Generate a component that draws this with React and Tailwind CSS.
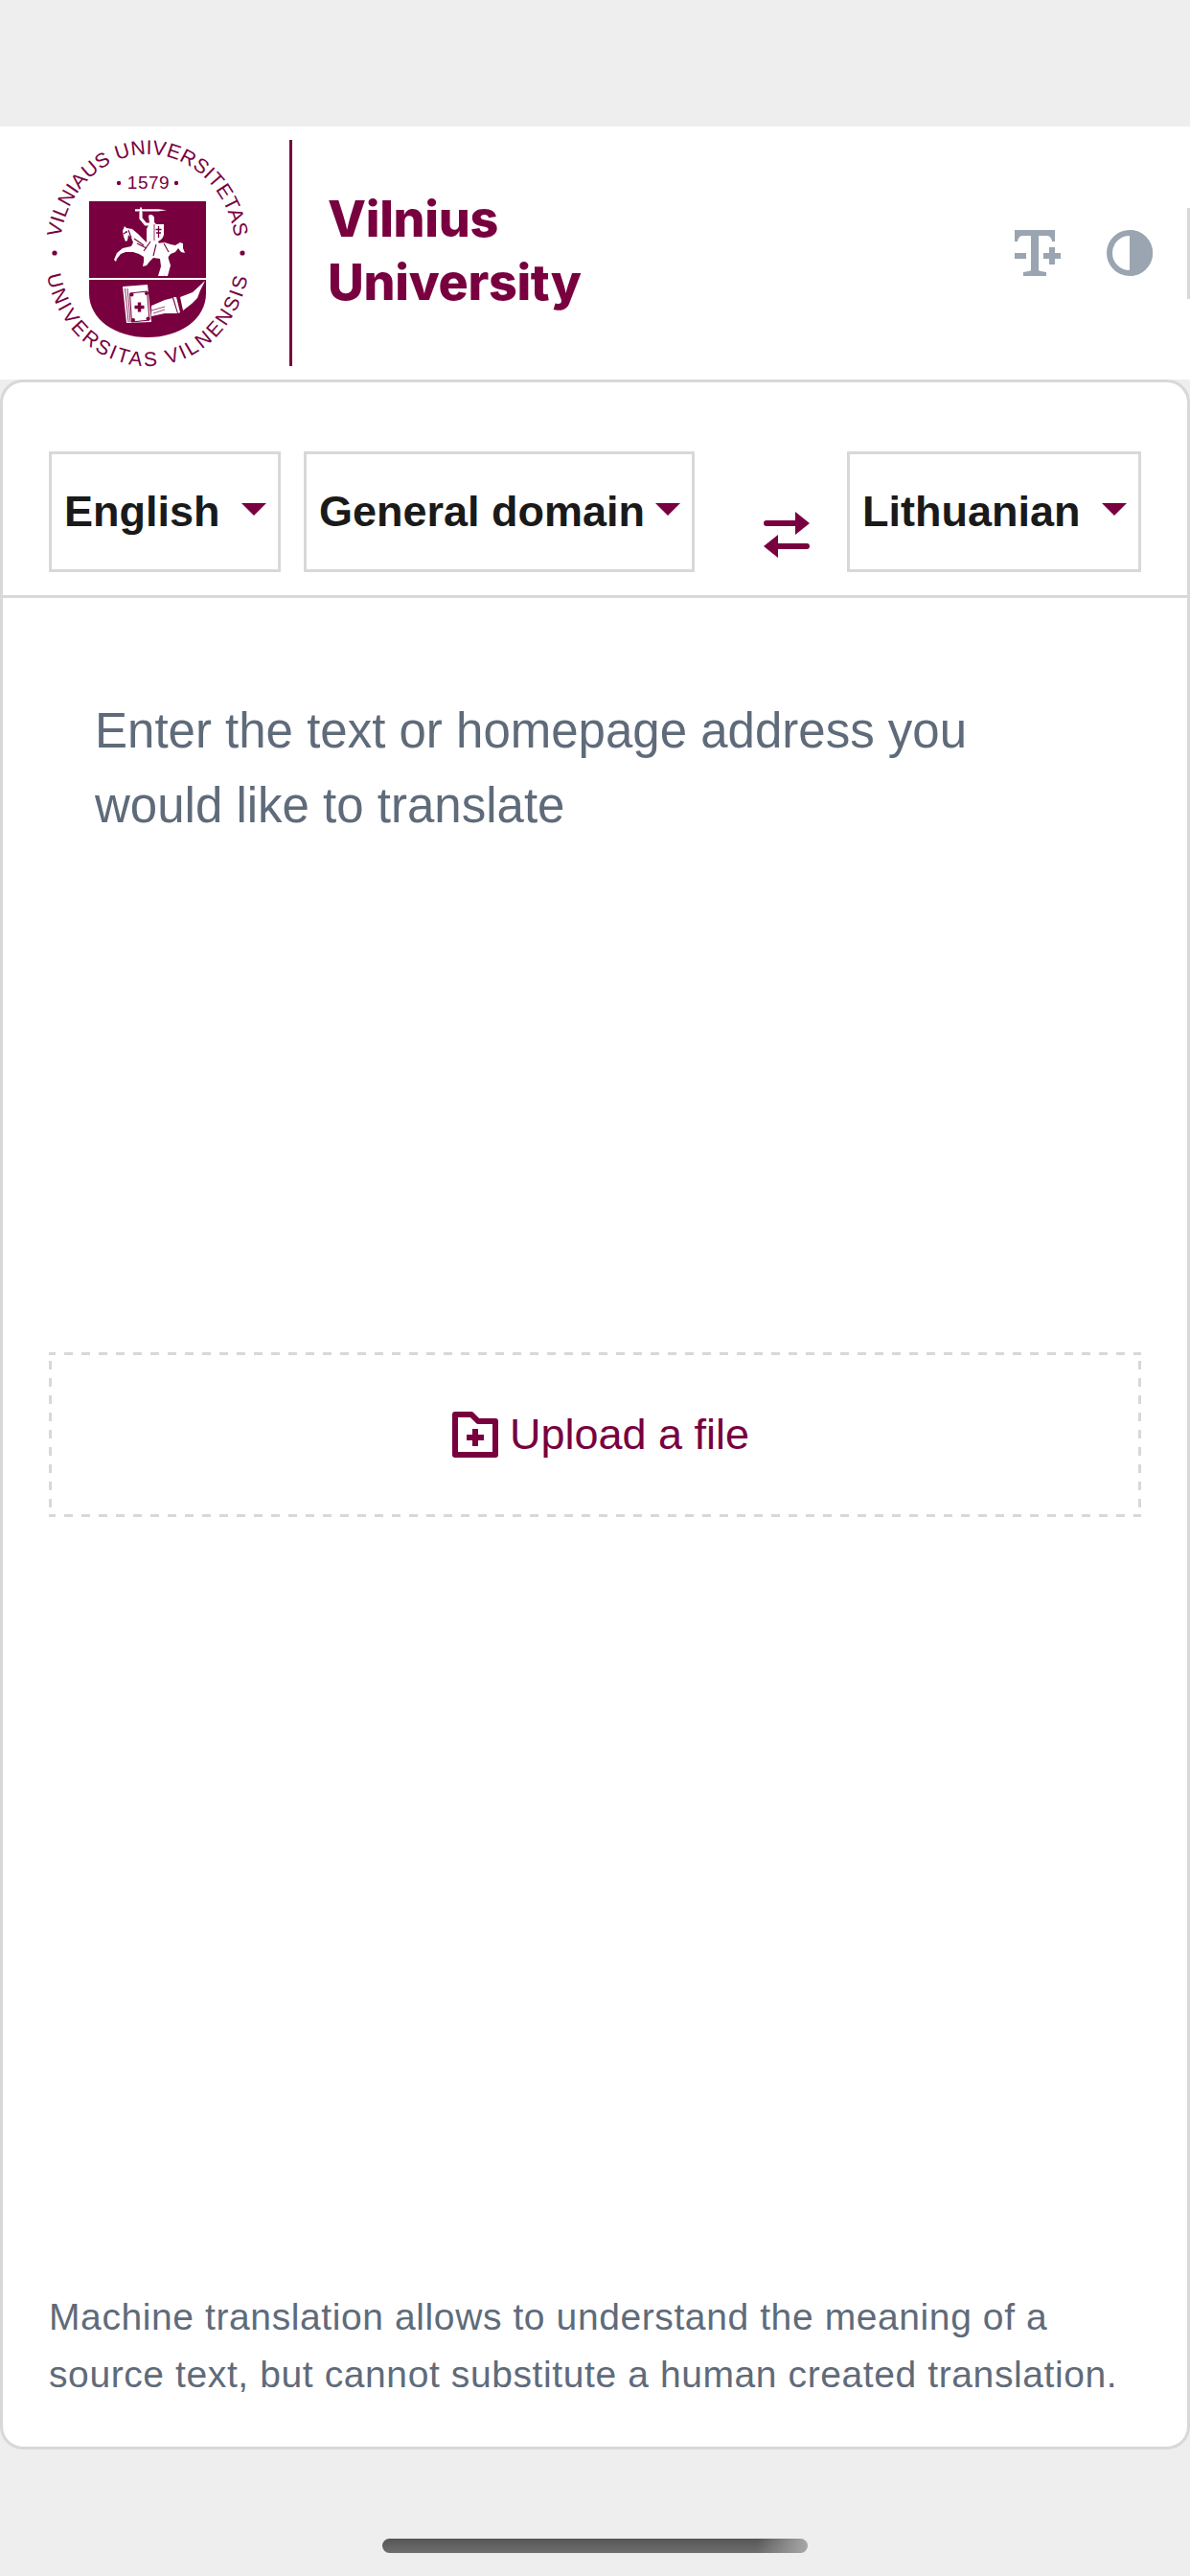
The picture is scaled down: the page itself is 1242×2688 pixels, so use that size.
import React from 'react';

const WINE = '#78003f';

function Knight() {
  return (
    <g>
      {/* sword and raised arm */}
      <path d="M141 217.200 H165 L174 218.200 L165 219.400 H141 Z" fill="#fff" />
      <rect x="146" y="215.500" width="2" height="6" fill="#fff" />
      <path d="M147 220 L147 227 L152 233 L157 233" fill="none" stroke="#fff" strokeWidth="3.200" />
      {/* rider */}
      <path d="M155 224 C157 222 160 223 161 226 L161 231 L163 233 L171 233 L171 244 C170 248 167 250 165 251 L168 258 L160 262 L156 262 L153 252 L153 238 L156 232 Z" fill="#fff" />
      <path d="M165.500 235 V247 M162.500 238.500 H168.500 M163 242 H168" stroke={WINE} strokeWidth="1.300" fill="none" />
      <path d="M161 233 L161 250" stroke={WINE} strokeWidth="0.800" fill="none" />
      {/* horse */}
      <path d="M130 235 L132 237 L138 238 L144 243 L150 249 L153 252 L163 253 L172 252 L178 254 L183 255 L188 252 L191 253 L191 258 L193 263 L189 262 L186 258 L183 262 L178 264 L175 268 L175 276 L171 287 L165 287 L168 277 L167 269 L160 268 L156 272 L153 276 L149 277 L150 272 L150 267 L145 264 L139 262 L131 262 L126 264 L122 269 L121 272 L119 270 L122 263 L128 258 L137 256 L139 252 L137 247 L134 244 L133 250 L131 251 L129 246 L128 240 Z" fill="#fff" />
      <path d="M175 266 L178 276 L175 287 H171 L174 277 L171 268 Z" fill="#fff" />
      {/* harness */}
      <path d="M134 239 L137 247 M140 248 L150 255 M143 253 L153 258 M150 261 L157 251 M171 253 L176 262 M163 254 L160 266 M132 241 L129 243" stroke={WINE} strokeWidth="1.100" fill="none" />
      <circle cx="132" cy="241" r="0.900" fill={WINE} />
    </g>
  );
}

function BookAndHand() {
  return (
    <g>
      {/* book */}
      <path d="M128 298 L154 296 L158 335 L132 336 Z" fill="#fff" />
      <path d="M130.500 300 L134 335 M133 300 L136 335" stroke={WINE} strokeWidth="0.800" fill="none" />
      <path d="M135.500 305 L153.500 303 L156 333 L137.500 335 Z" fill="#fff" stroke={WINE} strokeWidth="1" />
      <path d="M145.500 314.500 V324.500 M140.500 319.500 H150.500" stroke={WINE} strokeWidth="3.400" fill="none" />
      <circle cx="137.500" cy="306.500" r="2" fill={WINE} />
      <circle cx="153" cy="305" r="2" fill={WINE} />
      <circle cx="139" cy="333" r="2" fill={WINE} />
      <circle cx="154.500" cy="331.500" r="2" fill={WINE} />
      {/* hand and sleeve */}
      <path d="M158 318 L172 312 L180 310 L185 326 L172 326 L158 329 Z" fill="#fff" />
      <path d="M158 323 L172 319 M160 326 L172 322" stroke={WINE} strokeWidth="0.700" fill="none" />
      <path d="M181 309 L184 309 L188 325 L186 326 Z" fill="#fff" />
      <path d="M188 309 L201 304 L214 292 L209 302 L206 310 L200 316 L191 323 Z" fill="#fff" />
    </g>
  );
}

function Seal() {
  return (
    <svg width="216" height="240" viewBox="46 143 216 240" className="shrink-0 overflow-visible">
      <defs>
        <path id="sealTop" d="M 62 263 A 92 103 0 0 1 246 263" fill="none" />
        <path id="sealBottom" d="M 47 263 A 107 118 0 0 0 261 263" fill="none" />
      </defs>
      <text fontFamily="'Liberation Sans', sans-serif" fontSize="21" letterSpacing="0.300" fill={WINE}>
        <textPath href="#sealTop" startOffset="50%" textAnchor="middle">VILNIAUS UNIVERSITETAS</textPath>
      </text>
      <text fontFamily="'Liberation Sans', sans-serif" fontSize="21" letterSpacing="2.500" fill={WINE}>
        <textPath href="#sealBottom" startOffset="50%" textAnchor="middle">UNIVERSITAS VILNENSIS</textPath>
      </text>
      <text x="155" y="196" textAnchor="middle" fontFamily="'Liberation Sans', sans-serif" fontSize="19" letterSpacing="0.500" fill={WINE}>1579</text>
      <circle cx="124" cy="190" r="2.200" fill={WINE} />
      <circle cx="184" cy="190" r="2.200" fill={WINE} />
      <circle cx="57" cy="263" r="2.600" fill={WINE} />
      <circle cx="253" cy="263" r="2.600" fill={WINE} />

      <rect x="93" y="209" width="122" height="80" fill={WINE} />
      <path d="M93 291 H215 V305 C215 332 188 351 154 351 C120 351 93 332 93 305 Z" fill={WINE} />
      <Knight />
      <BookAndHand />
    </svg>
  );
}

function Select({ label, width }) {
  return (
    <div className={`${width} h-[126px] border-[3px] border-[#d8d8d8] flex items-center justify-between pl-[13px] pr-[12px] shrink-0`}>
      <span className="text-[45px] font-bold text-[#1a1a1a] leading-none -mt-[2px] whitespace-nowrap">{label}</span>
      <span className="w-0 h-0 border-l-[13px] border-r-[13px] border-t-[13px] border-l-transparent border-r-transparent border-t-[#78003f] -mt-[5px]"></span>
    </div>
  );
}

function HeaderIcons() {
  return (
    <div className="flex items-center gap-[48px] ml-auto">
      <svg width="48" height="48" viewBox="0 0 48 48" fill="#9aa5b1">
        <path d="M0 0 H42 V12 H39 C38 7 36 6 33 6 H25 V42 C25 43 29 43 33 44 V48 H9 V44 C13 43 17 43 17 42 V6 H9 C6 6 4 7 3 12 H0 Z" />
        <rect x="0" y="24" width="12" height="6" />
        <path d="M36 18 H42 V24 H48 V30 H42 V36 H36 V30 H30 V24 H36 Z" />
      </svg>
      <svg width="48" height="48" viewBox="0 0 48 48">
        <circle cx="24" cy="24" r="21" fill="#fff" stroke="#9aa5b1" strokeWidth="6" />
        <path d="M24 0 A24 24 0 0 1 24 48 Z" fill="#9aa5b1" />
      </svg>
    </div>
  );
}

export default function App() {
  return (
    <div className="w-[1242px] h-[2688px] bg-[#eeeeee] flex flex-col font-['Liberation_Sans',Arial,sans-serif] overflow-hidden">
      <div className="h-[132px] shrink-0"></div>

      {/* University header */}
      <header className="h-[264px] shrink-0 bg-white flex items-center pl-[46px]">
        <Seal />
        <div className="w-[3px] h-[236px] bg-[#78003f] ml-[40px] shrink-0"></div>
        <div className="ml-[37px] font-['Inter',sans-serif] font-extrabold text-[52px] leading-[66px] text-[#78003f] -mt-[4px] tracking-[-0.3px]">
          <div>Vilnius</div>
          <div>University</div>
        </div>
        <HeaderIcons />
        <div className="w-[3px] h-[95px] bg-[#d8d8d8] ml-[36px] shrink-0"></div>
      </header>

      {/* Translation card */}
      <main className="h-[2160px] shrink-0 bg-white border-[3px] border-[#d8d8d8] rounded-[24px] flex flex-col">
        <div className="h-[225px] shrink-0 border-b-[3px] border-[#d8d8d8] flex items-start pt-[72px] pl-[48px]">
          <Select label="English" width="w-[242px]" />
          <div className="ml-[24px]">
            <Select label="General domain" width="w-[408px]" />
          </div>
          <svg width="48" height="48" viewBox="0 0 48 48" fill="#78003f" className="ml-[72px] mt-[63px] shrink-0">
            <path d="M33 0 L48 12 L33 24 V15 H3 A3 3 0 0 1 3 9 H33 Z" />
            <path d="M15 24 L0 36 L15 48 V39 H45 A3 3 0 0 0 45 33 H15 Z" />
          </svg>
          <div className="ml-[39px]">
            <Select label="Lithuanian" width="w-[307px]" />
          </div>
        </div>

        <div className="flex-1 px-[48px] flex flex-col">
          <p className="mt-[100px] pl-[48px] pr-[100px] text-[51px] leading-[78px] text-[#5f6b7a] h-[156px]">
            Enter the text or homepage address you would like to translate
          </p>
          <button className="mt-[531px] h-[172px] w-[1140px] pl-[12px] flex items-center justify-center text-[45px] text-[#78003f] bg-[linear-gradient(90deg,#d8d8d8_50%,transparent_50%),linear-gradient(90deg,#d8d8d8_50%,transparent_50%),linear-gradient(0deg,#d8d8d8_50%,transparent_50%),linear-gradient(0deg,#d8d8d8_50%,transparent_50%)] bg-[length:18px_3px,18px_3px,3px_18px,3px_18px] bg-[position:-2px_0,-2px_100%,0_0,100%_0] [background-repeat:repeat-x,repeat-x,repeat-y,repeat-y]">
            <svg width="48" height="48" viewBox="0 0 48 48" fill="none" className="mr-[12px]">
              <path d="M3 3 H20 L27 10 H45 V45 H3 Z" stroke="#78003f" strokeWidth="6" strokeLinejoin="round" />
              <path d="M21 18 H27 V24 H33 V30 H27 V36 H21 V30 H15 V24 H21 Z" fill="#78003f" />
            </svg>
            Upload a file
          </button>
          <p className="mt-auto mb-[45px] text-[39px] leading-[60px] tracking-[0.6px] text-[#5f6b7a]">
            Machine translation allows to understand the meaning of a source text, but cannot substitute a human created translation.
          </p>
        </div>
      </main>

      {/* Home indicator */}
      <div className="flex-1 flex justify-center">
        <div className="mt-[93px] w-[444px] h-[15px] rounded-full bg-[linear-gradient(90deg,transparent_88%,#a8a8a8_100%),linear-gradient(180deg,#555555,#6e6e6e)]"></div>
      </div>
    </div>
  );
}
